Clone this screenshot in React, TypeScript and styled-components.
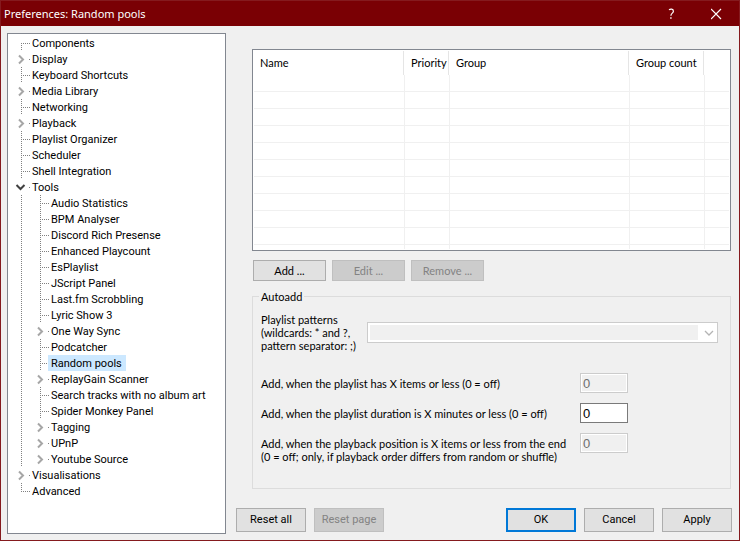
import React, { useState } from "react";
import styled, { createGlobalStyle, css } from "styled-components";

const treeFont = `Roboto, "Noto Sans", sans-serif`;
const formFont = `Lato, "Liberation Sans", sans-serif`;
const face = "#f0f0f0";

const GlobalStyle = createGlobalStyle`
  *, *::before, *::after { box-sizing: border-box; }
  body { margin: 0; background: ${face}; }
  button, input, select { font: inherit; color: inherit; margin: 0; }
`;

const Window = styled.div`
  display: flex;
  flex-direction: column;
  min-height: 100vh;
  border: 1px solid #851a1e;
  background: ${face};
  color: #000;
  font: 11px/16px ${treeFont};
  font-variant-ligatures: none;
`;

const TitleBar = styled.header`
  display: flex;
  align-items: center;
  height: 25px;
  padding-left: 3px;
  background: #7a0004;
  color: #fff;
`;

const Title = styled.h1`
  flex: 1;
  margin: 0;
  font: 11px/16px "Noto Sans", sans-serif;
`;

const TitleButton = styled.button`
  display: flex;
  align-items: center;
  justify-content: center;
  width: 45px;
  height: 25px;
  padding: 0;
  border: 0;
  background: transparent;
`;

const Body = styled.div`
  flex: 1;
  display: grid;
  grid-template-columns: minmax(0, 219fr) minmax(0, 496fr);
  gap: 10px;
  padding: 7px 7px 6px 6px;
`;

const TreePane = styled.nav`
  padding: 1px 0 0 4px;
  border: 1px solid #828790;
  background: #fff;
`;

const TreeList = styled.ul`
  margin: 0;
  padding: 0;
  list-style: none;
`;

const TreeRow = styled.div`
  display: flex;
  height: 16px;
`;

const dotsX = "repeating-linear-gradient(to right, #808080 0 1px, transparent 1px 2px)";
const dotsY = "repeating-linear-gradient(to bottom, #808080 0 1px, transparent 1px 2px)";

const AncestorGuide = styled.span`
  flex: none;
  width: 19px;
  background: ${dotsY} 9px 0 / 1px 16px no-repeat;
`;

type BranchShape = "middle" | "first" | "last" | "expander";

const branchBackground: Record<BranchShape, string> = {
  middle: `${dotsY} 9px 0 / 1px 16px no-repeat, ${dotsX} 9px 8px / 9px 1px no-repeat`,
  first: `${dotsY} 9px 8px / 1px 8px no-repeat, ${dotsX} 9px 8px / 9px 1px no-repeat`,
  last: `${dotsY} 9px 0 / 1px 9px no-repeat, ${dotsX} 9px 8px / 9px 1px no-repeat`,
  expander: `${dotsX} 17px 8px / 1px 1px no-repeat`,
};

const Branch = styled.span<{ $shape: BranchShape }>`
  flex: none;
  width: 18px;
  background: ${(p) => branchBackground[p.$shape]};
`;

const Expander = styled.button`
  display: block;
  width: 16px;
  height: 16px;
  padding: 0;
  border: 0;
  background: transparent;
  svg { display: block; }
`;

const TreeLabel = styled.button<{ $selected: boolean }>`
  height: 16px;
  margin-left: -1px;
  padding: 1px 4px 0 3px;
  border: 0;
  background: ${(p) => (p.$selected ? "#cce8ff" : "transparent")};
  line-height: 15px;
  white-space: nowrap;
`;

const Main = styled.main`
  display: flex;
  flex-direction: column;
`;

const Page = styled.section`
  flex: 1;
  display: flex;
  flex-direction: column;
  padding: 16px 1px 19px 16px;
  font: 11px/13px ${formFont};
`;

const ListFrame = styled.div`
  padding: 1px;
  border: 1px solid #828790;
  background: #fff;
`;

const PoolTable = styled.table`
  width: 100%;
  table-layout: fixed;
  border-collapse: separate;
  border-spacing: 0;
`;

const Column = styled.col<{ $width?: number }>`
  ${(p) => p.$width && css`width: ${p.$width}px;`}
`;

const HeadCell = styled.th`
  height: 24px;
  padding: 0 0 2px 6px;
  background: linear-gradient(#e5e5e5, #e5e5e5) right 1px top 0 / 1px 100% no-repeat;
  font-weight: 400;
  text-align: left;
  white-space: nowrap;
  &:last-child { background: none; }
`;

const Cell = styled.td<{ $tail?: boolean }>`
  height: ${(p) => (p.$tail ? 4 : 17)}px;
  padding: 0;
  border-right: 1px solid ${face};
  border-bottom: ${(p) => (p.$tail ? "0" : `1px solid ${face}`)};
  &:last-child { border-right: 0; }
`;

const ListActions = styled.div`
  display: flex;
  gap: 6px;
  margin: 9px 0 9px 1px;
`;

const Button = styled.button<{ $kind: "list" | "dialog"; $primary?: boolean }>`
  width: ${(p) => (p.$kind === "list" ? 73 : 70)}px;
  height: ${(p) => (p.$kind === "list" ? 21 : 24)}px;
  padding: 0;
  border: ${(p) => (p.$primary ? "2px solid #0078d7" : "1px solid #adadad")};
  background: #e1e1e1;
  &:disabled {
    border-color: #bfbfbf;
    background: #cccccc;
    color: #838383;
  }
`;

const Group = styled.fieldset`
  flex: 1;
  min-width: 0;
  margin: 0;
  padding: 10px 12px 22px 8px;
  border: 1px solid #dcdcdc;
`;

const Legend = styled.legend`
  margin-left: -2px;
  padding: 0 2px;
`;

const PatternRow = styled.div`
  display: grid;
  grid-template-columns: 106px 1fr;
  align-items: center;
  margin-bottom: 21px;
`;

const FieldLabel = styled.label`
  white-space: nowrap;
`;

const PatternField = styled.div`
  display: flex;
  align-items: center;
  height: 21px;
  padding: 2px 3px 2px 2px;
  border: 1px solid #cccccc;
  background: #fff;
`;

const PatternSelect = styled.select`
  flex: 1;
  height: 15px;
  margin-right: 6px;
  padding: 0;
  border: 0;
  border-radius: 0;
  appearance: none;
  background: ${face};
  opacity: 1;
`;

const NumberRow = styled.div`
  display: grid;
  grid-template-columns: 319px 48px;
  align-items: start;
  min-height: 30px;
`;

const RowLabel = styled(FieldLabel)`
  padding-top: 4px;
`;

const NumberInput = styled.input`
  width: 48px;
  height: 20px;
  padding: 0 2px;
  border: 1px solid #7a7a7a;
  background: #fff;
  font: 13px/16px "Liberation Sans Narrow", "Liberation Sans", sans-serif;
  &:disabled {
    border-color: #cccccc;
    background: ${face};
    box-shadow: inset 0 0 0 1px #fff;
    color: #6d6d6d;
  }
`;

const Footer = styled.footer`
  display: flex;
  gap: 8px;
  margin-bottom: 2px;
`;

const Spacer = styled.span`
  flex: 1;
`;

type Node = { label: string; expandable?: boolean; children?: Node[] };

const nodes: Node[] = [
  { label: "Components" },
  { label: "Display", expandable: true },
  { label: "Keyboard Shortcuts" },
  { label: "Media Library", expandable: true },
  { label: "Networking" },
  { label: "Playback", expandable: true },
  { label: "Playlist Organizer" },
  { label: "Scheduler" },
  { label: "Shell Integration" },
  {
    label: "Tools",
    expandable: true,
    children: [
      { label: "Audio Statistics" },
      { label: "BPM Analyser" },
      { label: "Discord Rich Presense" },
      { label: "Enhanced Playcount" },
      { label: "EsPlaylist" },
      { label: "JScript Panel" },
      { label: "Last.fm Scrobbling" },
      { label: "Lyric Show 3" },
      { label: "One Way Sync", expandable: true },
      { label: "Podcatcher" },
      { label: "Random pools" },
      { label: "ReplayGain Scanner", expandable: true },
      { label: "Search tracks with no album art" },
      { label: "Spider Monkey Panel" },
      { label: "Tagging", expandable: true },
      { label: "UPnP", expandable: true },
      { label: "Youtube Source", expandable: true },
    ],
  },
  { label: "Visualisations", expandable: true },
  { label: "Advanced" },
];

const columns = [
  { title: "Name", width: 151 },
  { title: "Priority", width: 45 },
  { title: "Group", width: 180 },
  { title: "Group count", width: 75 },
  { title: "", width: undefined },
];

function Chevron({ open }: { open: boolean }) {
  return (
    <svg width="16" height="16" viewBox="0 0 16 16" fill="none" strokeWidth="2" aria-hidden="true">
      {open ? (
        <path d="M4.5 6 L8.5 10 L12.5 6" stroke="#404040" />
      ) : (
        <path d="M7 4.5 L11 8.5 L7 12.5" stroke="#a6a6a6" />
      )}
    </svg>
  );
}

function TreeLevel({
  items,
  depth,
  selected,
  onSelect,
}: {
  items: Node[];
  depth: number;
  selected: string;
  onSelect: (label: string) => void;
}) {
  const [closed, setClosed] = useState(false);
  return (
    <TreeList role={depth === 0 ? "tree" : "group"}>
      {items.map((node, i) => {
        const open = !!node.children && !closed;
        const shape: BranchShape = node.expandable
          ? "expander"
          : depth === 0 && i === 0
            ? "first"
            : i === items.length - 1
              ? "last"
              : "middle";
        return (
          <li key={node.label} role="treeitem" aria-selected={selected === node.label} aria-expanded={node.expandable ? open : undefined}>
            <TreeRow>
              {depth > 0 && <AncestorGuide />}
              <Branch $shape={shape}>
                {node.expandable && (
                  <Expander
                    type="button"
                    aria-label={`${open ? "Collapse" : "Expand"} ${node.label}`}
                    onClick={() => node.children && setClosed(!closed)}
                  >
                    <Chevron open={open} />
                  </Expander>
                )}
              </Branch>
              <TreeLabel type="button" $selected={selected === node.label} onClick={() => onSelect(node.label)}>
                {node.label}
              </TreeLabel>
            </TreeRow>
            {open && <TreeLevel items={node.children!} depth={depth + 1} selected={selected} onSelect={onSelect} />}
          </li>
        );
      })}
    </TreeList>
  );
}

export default function App() {
  const [selected, setSelected] = useState("Random pools");
  return (
    <Window>
      <GlobalStyle />
      <TitleBar>
        <Title>Preferences: Random pools</Title>
        <TitleButton type="button" aria-label="Help">
          <svg width="8" height="12" viewBox="0 0 8 12" fill="none" stroke="#fff" strokeWidth="1.2" aria-hidden="true">
            <path d="M1 1.9 C2.2 0.9 5.4 0.6 5.4 3.2 C5.4 5.2 2.9 5.2 2.9 7.8" />
            <path d="M2.9 9.2 V10.8" strokeWidth="1.4" />
          </svg>
        </TitleButton>
        <TitleButton type="button" aria-label="Close">
          <svg width="12" height="12" viewBox="0 0 12 12" fill="none" stroke="#fff" strokeWidth="1.2" aria-hidden="true">
            <path d="M0 1 L10 11 M10 1 L0 11" />
          </svg>
        </TitleButton>
      </TitleBar>
      <Body>
        <TreePane aria-label="Preference pages">
          <TreeLevel items={nodes} depth={0} selected={selected} onSelect={setSelected} />
        </TreePane>
        <Main>
          <Page>
            <ListFrame>
              <PoolTable>
                <colgroup>
                  {columns.map((c, i) => (
                    <Column key={i} $width={c.width} />
                  ))}
                </colgroup>
                <thead>
                  <tr>
                    {columns.map((c, i) => (
                      <HeadCell key={i} scope="col">{c.title}</HeadCell>
                    ))}
                  </tr>
                </thead>
                <tbody>
                  {Array.from({ length: 11 }, (_, row) => (
                    <tr key={row}>
                      {columns.map((_, i) => (
                        <Cell key={i} $tail={row === 10} />
                      ))}
                    </tr>
                  ))}
                </tbody>
              </PoolTable>
            </ListFrame>
            <ListActions>
              <Button type="button" $kind="list">Add ...</Button>
              <Button type="button" $kind="list" disabled>Edit ...</Button>
              <Button type="button" $kind="list" disabled>Remove ...</Button>
            </ListActions>
            <Group>
              <Legend>Autoadd</Legend>
              <PatternRow>
                <FieldLabel htmlFor="patterns">
                  Playlist patterns<br />
                  (wildcards: * and ?,<br />
                  pattern separator: ;)
                </FieldLabel>
                <PatternField>
                  <PatternSelect id="patterns" disabled />
                  <svg width="10" height="6" viewBox="0 0 10 6" fill="none" stroke="#b4b4b4" strokeWidth="1.3" aria-hidden="true">
                    <path d="M1 1 L5 5 L9 1" />
                  </svg>
                </PatternField>
              </PatternRow>
              <NumberRow>
                <RowLabel htmlFor="items">Add, when the playlist has X items or less (0 = off)</RowLabel>
                <NumberInput id="items" type="text" defaultValue="0" disabled />
              </NumberRow>
              <NumberRow>
                <RowLabel htmlFor="minutes">Add, when the playlist duration is X minutes or less (0 = off)</RowLabel>
                <NumberInput id="minutes" type="text" defaultValue="0" />
              </NumberRow>
              <NumberRow>
                <RowLabel htmlFor="position">
                  Add, when the playback position is X items or less from the end<br />
                  (0 = off; only, if playback order differs from random or shuffle)
                </RowLabel>
                <NumberInput id="position" type="text" defaultValue="0" disabled />
              </NumberRow>
            </Group>
          </Page>
          <Footer>
            <Button type="button" $kind="dialog">Reset all</Button>
            <Button type="button" $kind="dialog" disabled>Reset page</Button>
            <Spacer />
            <Button type="button" $kind="dialog" $primary>OK</Button>
            <Button type="button" $kind="dialog">Cancel</Button>
            <Button type="button" $kind="dialog">Apply</Button>
          </Footer>
        </Main>
      </Body>
    </Window>
  );
}
